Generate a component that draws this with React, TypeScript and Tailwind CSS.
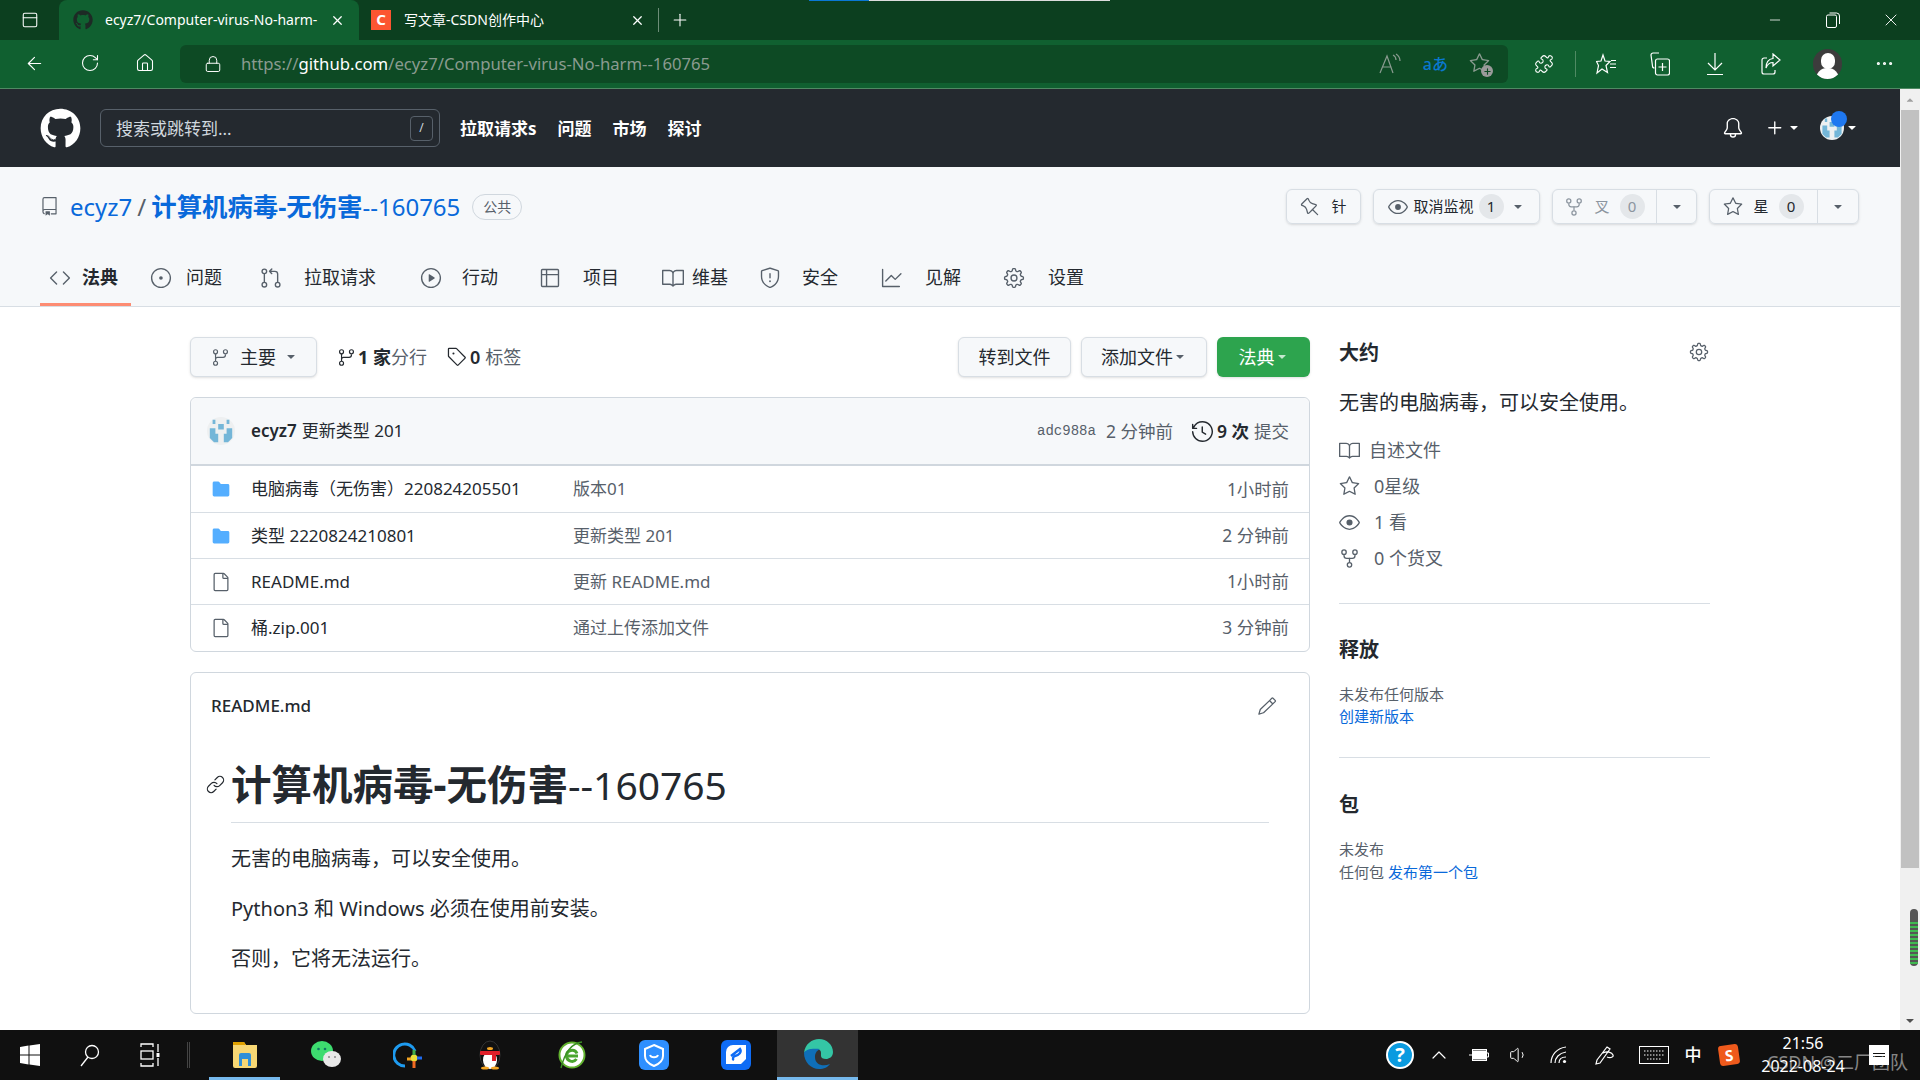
import {
  GoRepo, GoBell, GoPlus, GoPin, GoEye, GoRepoForked, GoStar, GoCode, GoIssueOpened,
  GoGitPullRequest, GoPlay, GoTable, GoBook, GoShield, GoGraph, GoGear, GoGitBranch, GoTag, GoHistory,
  GoFile, GoFileDirectoryFill, GoPencil, GoLink, GoTriangleDown,
} from "react-icons/go";
import { FaGithub } from "react-icons/fa";
import { ArrowLeft, RotateCw, Home, Lock, Puzzle, X, Plus, Minus, MoreHorizontal, ChevronUp, Volume1, PanelTop } from "lucide-react";

const tabs = [
  { label: "法典", icon: GoCode, active: true, w: "w-[91px]", pad: "pl-[9px]", gap: "gap-[11px]" },
  { label: "问题", icon: GoIssueOpened, w: "w-[129px]", pad: "pl-[19px]", gap: "gap-[14px]" },
  { label: "拉取请求", icon: GoGitPullRequest, w: "w-[160px]", pad: "pl-0", gap: "gap-[22px]" },
  { label: "行动", icon: GoPlay, w: "w-[119px]", pad: "pl-0", gap: "gap-[20px]" },
  { label: "项目", icon: GoTable, w: "w-[123px]", pad: "pl-0", gap: "gap-[22px]" },
  { label: "维基", icon: GoBook, w: "w-[97px]", pad: "pl-0", gap: "gap-[8px]" },
  { label: "安全", icon: GoShield, w: "w-[122px]", pad: "pl-0", gap: "gap-[21px]" },
  { label: "见解", icon: GoGraph, w: "w-[122px]", pad: "pl-0", gap: "gap-[22px]" },
  { label: "设置", icon: GoGear, w: "w-[100px]", pad: "pl-0", gap: "gap-[23px]" },
];

const files = [
  { name: "电脑病毒（无伤害）220824205501", msg: "版本01", time: "1小时前", dir: true },
  { name: "类型 2220824210801", msg: "更新类型 201", time: "2 分钟前", dir: true },
  { name: "README.md", msg: "更新 README.md", time: "1小时前", dir: false },
  { name: "桶.zip.001", msg: "通过上传添加文件", time: "3 分钟前", dir: false },
];

function Avatar({ size }: { size: number }) {
  return (
    <svg width={size} height={size} viewBox="0 0 20 20" className="shrink-0">
      <circle cx="10" cy="10" r="10" fill="#eef0f1" />
      <path d="M2 8h4v4h2v6H5l-3-3zM18 8h-4v4h-2v6h3l3-3zM8 5h4v4H8zM4 2h2v3H4zM14 2h2v3h-2z" fill="#74b6d8" />
    </svg>
  );
}

function Count({ n, dim }: { n: string; dim?: boolean }) {
  return (
    <span className={`w-[25px] h-[25px] rounded-full bg-[#e4e7ea] flex items-center justify-center text-[15px] ${dim ? "text-[#8c959f]" : "text-[#24292f]"}`}>
      {n}
    </span>
  );
}

function BarIcon({ children }: { children: React.ReactNode }) {
  return <span className="w-[55px] flex justify-center text-white">{children}</span>;
}

function TrayIcon({ children, cls }: { children: React.ReactNode; cls: string }) {
  return <span className={`flex items-center justify-center text-white ${cls}`}>{children}</span>;
}

export default function App() {
  return (
    <div className="w-[1920px] h-[1080px] overflow-hidden flex flex-col font-['Noto_Sans','Noto_Sans_CJK_SC',sans-serif] text-[#24292f] bg-white">
      {/* edge tab strip */}
      <div className="relative h-[40px] shrink-0 bg-[#0c3f1f] flex items-end text-white text-sm">
        <div className="absolute top-0 left-[809px] w-[301px] h-[1px] flex">
          <div className="w-[60px] bg-[#0a78d4]" />
          <div className="flex-1 bg-[#dddddd]" />
        </div>
        <div className="w-[59px] h-full flex items-center justify-center">
          <PanelTop size={18} strokeWidth={1.4} />
        </div>
        <div className="w-[300px] h-full bg-[#106030] rounded-t-lg flex items-center pl-[14px] pr-[14px]">
          <FaGithub size={20} className="text-[#1d2a25] shrink-0" />
          <span className="ml-[12px] w-[216px] overflow-hidden whitespace-nowrap text-[14px]">ecyz7/Computer-virus-No-harm-</span>
          <X size={15} className="ml-auto" />
        </div>
        <div className="w-[300px] h-full flex items-center pl-[12px] pr-[14px]">
          <span className="w-[20px] h-[20px] bg-[#fc5531] flex items-center justify-center text-white text-[15px] font-bold shrink-0">C</span>
          <span className="ml-[13px] text-[14px]">写文章-CSDN创作中心</span>
          <X size={15} className="ml-auto" />
        </div>
        <div className="w-px h-[24px] bg-[#6d8d78] mb-[8px] ml-[-1px]" />
        <div className="w-[42px] h-full flex items-center justify-center">
          <Plus size={20} strokeWidth={1.3} />
        </div>
        <div className="ml-auto h-full flex items-center">
          <span className="w-[58px] flex justify-center"><Minus size={16} strokeWidth={1.2} /></span>
          <span className="w-[58px] flex justify-center">
            <svg width="14" height="16" viewBox="0 0 14 16" fill="none" stroke="currentColor">
              <rect x="0.5" y="3" width="10" height="12.5" rx="1.5" />
              <path d="M3.5 1h7a3 3 0 0 1 3 3v8" />
            </svg>
          </span>
          <span className="w-[58px] flex justify-center"><X size={20} strokeWidth={1.1} /></span>
        </div>
      </div>

      {/* edge toolbar */}
      <div className="h-[49px] shrink-0 bg-[#106030] border-b border-[#4f8a63] flex items-center pb-[1px]">
        <div className="w-[180px] flex pl-[7px]">
          <BarIcon><ArrowLeft size={21} strokeWidth={1.3} /></BarIcon>
          <BarIcon><RotateCw size={20} strokeWidth={1.3} /></BarIcon>
          <BarIcon><Home size={20} strokeWidth={1.3} /></BarIcon>
        </div>
        <div className="w-[1328px] h-[38px] bg-[#0d4a24] rounded-md flex items-center">
          <Lock size={18} strokeWidth={1.3} className="ml-[24px] text-white" />
          <span className="ml-[19px] text-[16.7px] text-[#8a9b90] whitespace-nowrap">
            https://<span className="text-white">github.com</span>/ecyz7/Computer-virus-No-harm--160765
          </span>
          <div className="ml-auto flex items-center pr-[18px] gap-[21px]">
            <svg width="24" height="24" viewBox="0 0 24 24" fill="none" stroke="#8a9b90" strokeWidth="1.2">
              <path d="M2 21L9 4l6 17M4.5 15h9M15 3c2 1 3 3 3 5M18 2c3 2 4 4 4 7" />
            </svg>
            <span className="text-[#0a78cf] text-[16px] leading-none font-medium">aあ</span>
            <span className="relative text-[#8a9b90]">
              <GoStar size={21} />
              <span className="absolute -right-[3px] -bottom-[3px] w-[12px] h-[12px] rounded-full bg-[#9a9a9a] flex items-center justify-center"><Plus size={9} className="text-[#0d4a24]" strokeWidth={3} /></span>
            </span>
          </div>
        </div>
        <div className="flex-1 flex items-center text-white pl-[26px]">
          <Puzzle size={20} strokeWidth={1.3} />
          <div className="w-px h-[26px] bg-[#4f8a63] ml-[21px] mr-[20px]" />
          <svg width="20" height="22" viewBox="0 0 20 22" fill="none" stroke="white" strokeWidth="1.2">
            <path d="M7 2l2 6 5 .5-4 4 1.5 7L6 16l-5 4 1.5-7.5L0.5 8.5 5 8z" />
            <path d="M14 11h6M14 14.5h6M15 7.5h5" />
          </svg>
          <svg width="20" height="24" viewBox="0 0 20 24" fill="none" stroke="white" strokeWidth="1.2" className="ml-[34px]">
            <path d="M9 1H3a2 2 0 0 0-2 2l1.5 11a2 2 0 0 0 2 2" />
            <rect x="5.5" y="7" width="14" height="16" rx="2" />
            <path d="M12.5 11v8M8.5 15h8" />
          </svg>
          <svg width="20" height="24" viewBox="0 0 20 24" fill="none" stroke="white" strokeWidth="1.2" className="ml-[35px]">
            <path d="M10 1v17M3 11l7 7 7-7M2 22.5h16" />
          </svg>
          <svg width="20" height="22" viewBox="0 0 20 22" fill="none" stroke="white" strokeWidth="1.2" className="ml-[36px]">
            <path d="M6 5H3a2 2 0 0 0-2 2v12a2 2 0 0 0 2 2h9a2 2 0 0 0 2-2v-2" />
            <path d="M12 1l7 6-7 6V9.5C9 9.5 6.5 11 5 15c0-6 3-9 7-9.5z" />
          </svg>
          <span className="ml-[32px] w-[29px] h-[30px] rounded-full bg-[#3c3c3c] overflow-hidden flex flex-col items-center justify-end">
            <span className="w-[14px] h-[16px] rounded-full bg-white mb-[-1px]" />
            <span className="w-[23px] h-[11px] rounded-t-full bg-white" />
          </span>
          <span className="ml-[32px]"><MoreHorizontal size={21} strokeWidth={1.6} /></span>
        </div>
      </div>

      <div className="flex-1 min-h-0 flex">
        <div className="flex-1 min-w-0 flex flex-col">
          {/* github header */}
          <header className="h-[78px] shrink-0 bg-[#24292f] flex items-center text-white">
            <FaGithub size={41} className="ml-[40px] shrink-0" />
            <div className="ml-[19px] w-[340px] h-[38px] rounded-md border border-[#57606a] flex items-center justify-between pl-[15px] pr-[6px]">
              <span className="text-[17px] text-[#d0d7de] pt-[1px]">搜索或跳转到...</span>
              <span className="w-[23px] h-[25px] rounded border border-[#57606a] flex items-center justify-center text-xs text-[#d0d7de]">/</span>
            </div>
            <nav className="ml-[20px] pt-[1px] flex items-center gap-[21px] text-[17px] font-bold">
              <span>拉取请求s</span>
              <span>问题</span>
              <span>市场</span>
              <span>探讨</span>
            </nav>
            <div className="ml-auto flex items-center mr-[41px]">
              <GoBell size={22} />
              <GoPlus size={22} className="ml-[20px]" />
              <GoTriangleDown size={14} className="ml-[1px]" />
              <span className="relative ml-[19px] flex">
                <Avatar size={24} />
                <span className="absolute -top-[5px] -right-[3px] w-[16px] h-[16px] rounded-full bg-[#1f78f0]" />
              </span>
              <GoTriangleDown size={14} className="ml-[1px]" />
            </div>
          </header>

          {/* repo head */}
          <div className="h-[140px] shrink-0 bg-[#f6f8fa] border-b border-[#d8dee4] flex flex-col">
            <div className="h-[79px] shrink-0 flex items-center pl-[40px] pr-[41px]">
              <GoRepo size={19} className="text-[#57606a]" />
              <a className="ml-[11px] text-[24px] text-[#0969da]">ecyz7</a>
              <span className="mx-[5px] text-[24px] text-[#57606a]">/</span>
              <a className="text-[24px] text-[#0969da]"><b className="font-bold text-[25.4px]">计算机病毒-无伤害</b>--160765</a>
              <span className="ml-[12px] h-[26px] w-[50px] border border-[#d0d7de] rounded-full flex items-center justify-center text-[14px] text-[#57606a]">公共</span>
              <div className="ml-auto flex items-center gap-[12px] text-[15px]">
                <button className="w-[75px] h-[35px] border border-[#d8dee4] rounded-md shadow-sm flex items-center justify-center gap-[11px]">
                  <GoPin size={20} className="text-[#57606a]" /> 针
                </button>
                <button className="w-[167px] h-[35px] border border-[#d8dee4] rounded-md shadow-sm flex items-center justify-center gap-[5px]">
                  <GoEye size={20} className="text-[#57606a]" /> 取消监视 <Count n="1" />
                  <GoTriangleDown size={14} className="text-[#57606a] ml-[2px]" />
                </button>
                <div className="w-[145px] h-[35px] border border-[#d8dee4] rounded-md shadow-sm flex items-center">
                  <span className="w-[104px] h-full border-r border-[#d8dee4] flex items-center justify-center gap-[10px] text-[#8c959f]">
                    <GoRepoForked size={20} /> 叉 <Count n="0" dim />
                  </span>
                  <GoTriangleDown size={14} className="text-[#57606a] mx-auto" />
                </div>
                <div className="w-[150px] h-[35px] border border-[#d8dee4] rounded-md shadow-sm flex items-center">
                  <span className="w-[108px] h-full border-r border-[#d8dee4] flex items-center justify-center gap-[10px]">
                    <GoStar size={20} className="text-[#57606a]" /> 星 <Count n="0" />
                  </span>
                  <GoTriangleDown size={14} className="text-[#57606a] mx-auto" />
                </div>
              </div>
            </div>
            <nav className="flex-1 flex pl-[40px] text-[18px]">
              {tabs.map(t => (
                <div key={t.label} className={`${t.w} ${t.pad} ${t.gap} h-full pt-[6px] flex items-center whitespace-nowrap ${t.active ? "font-bold border-b-[3px] border-[#fd8c73]" : "border-b-[3px] border-transparent"}`}>
                  <t.icon size={22} className="text-[#57606a] shrink-0" />
                  <span>{t.label}</span>
                </div>
              ))}
            </nav>
          </div>

          {/* content */}
          <div className="flex-1 min-h-0 overflow-hidden flex pl-[190px] pt-[30px]">
            <main className="w-[1120px] shrink-0">
              <div className="h-[40px] flex items-center text-[18px]">
                <button className="w-[127px] h-[40px] bg-[#f6f8fa] border border-[#d8dee4] rounded-md shadow-sm flex items-center pl-[20px]">
                  <GoGitBranch size={19} className="text-[#57606a]" />
                  <span className="ml-[10px]">主要</span>
                  <GoTriangleDown size={14} className="ml-[8px] text-[#57606a]" />
                </button>
                <GoGitBranch size={19} className="ml-[20px]" />
                <span className="ml-[2px] font-bold">1 家</span><span className="text-[#57606a]">分行</span>
                <GoTag size={20} className="ml-[20px]" />
                <span className="ml-[3px] font-semibold">0</span><span className="ml-[5px] text-[#57606a]">标签</span>
                <div className="ml-auto flex gap-[10px]">
                  <button className="w-[113px] h-[40px] bg-[#f6f8fa] border border-[#d8dee4] rounded-md shadow-sm">转到文件</button>
                  <button className="w-[126px] h-[40px] bg-[#f6f8fa] border border-[#d8dee4] rounded-md shadow-sm flex items-center justify-center">添加文件<GoTriangleDown size={14} className="text-[#57606a]" /></button>
                  <button className="w-[93px] h-[40px] bg-[#2da44e] rounded-md shadow-sm text-white flex items-center justify-center">法典<GoTriangleDown size={14} className="text-[#c5e8cf]" /></button>
                </div>
              </div>

              <div className="mt-[20px] pb-[1px] border border-[#d0d7de] rounded-md">
                <div className="h-[68px] bg-[#f6f8fa] border-b-2 border-[#d0d7de] rounded-t-md flex items-center pl-[16px] pr-[20px] text-[17px]">
                  <Avatar size={28} />
                  <span className="ml-[16px] font-semibold">ecyz7</span>
                  <span className="ml-[5px]">更新类型 201</span>
                  <span className="ml-auto text-[14px] text-[#57606a] font-['Liberation_Mono',monospace]">adc988a</span>
                  <span className="ml-[10px] text-[17.5px] text-[#57606a]">2 分钟前</span>
                  <GoHistory size={23} className="ml-[18px]" />
                  <span className="ml-[3px] text-[17.5px] font-semibold">9 次</span>
                  <span className="ml-[5px] text-[17.5px] text-[#57606a]">提交</span>
                </div>
                {files.map((f, i) => (
                  <div key={f.name} className={`h-[46px] flex items-center px-[20px] text-[17px] ${i > 0 ? "border-t border-[#d8dee4]" : ""}`}>
                    <span className="w-[20px] flex justify-center">
                      {f.dir ? <GoFileDirectoryFill size={24} className="text-[#54aeff]" /> : <GoFile size={24} className="text-[#57606a]" />}
                    </span>
                    <span className="ml-[20px] w-[322px] whitespace-nowrap">{f.name}</span>
                    <span className="text-[#57606a]">{f.msg}</span>
                    <span className="ml-auto text-[17.4px] text-[#57606a]">{f.time}</span>
                  </div>
                ))}
              </div>

              <div className="mt-[20px] h-[342px] border border-[#d0d7de] rounded-md px-[20px]">
                <div className="h-[66px] flex items-center justify-between text-[17px] font-medium pr-[12px]">
                  <span>README.md</span>
                  <GoPencil size={20} className="text-[#57606a]" />
                </div>
                <div className="relative ml-[20px] mr-[20px]">
                  <GoLink size={19} className="absolute -left-[25px] top-[36px] text-[#24292f]" />
                  <h1 className="h-[84px] pt-[16px] border-b border-[#d8dee4] text-[39px] leading-[60px]">
                    <b className="font-bold text-[40.5px]">计算机病毒-无伤害</b>--160765
                  </h1>
                  <p className="mt-[20px] text-[20px] leading-[32px]">无害的电脑病毒，可以安全使用。</p>
                  <p className="mt-[18px] text-[20px] leading-[32px]">Python3 和 Windows 必须在使用前安装。</p>
                  <p className="mt-[18px] text-[20px] leading-[32px]">否则，它将无法运行。</p>
                </div>
              </div>
            </main>

            <aside className="ml-[29px] w-[371px] shrink-0">
              <div className="h-[32px] flex items-center justify-between pr-[1px]">
                <h2 className="text-[20px] font-bold">大约</h2>
                <GoGear size={20} className="text-[#57606a] mt-[-3px]" />
              </div>
              <p className="mt-[20px] text-[20px] leading-[28px]">无害的电脑病毒，可以安全使用。</p>
              <ul className="mt-[20px] text-[18px] text-[#57606a] flex flex-col gap-[10px]">
                <li className="h-[26px] flex items-center"><GoBook size={21} className="mr-[9px]" />自述文件</li>
                <li className="h-[26px] flex items-center"><GoStar size={21} className="mr-[14px]" />0星级</li>
                <li className="h-[26px] flex items-center"><GoEye size={21} className="mr-[14px]" />1 看</li>
                <li className="h-[26px] flex items-center"><GoRepoForked size={21} className="mr-[14px]" />0 个货叉</li>
              </ul>
              <div className="mt-[32px] border-t border-[#d8dee4] pt-[31px]">
                <h2 className="text-[20px] font-bold">释放</h2>
                <p className="mt-[18px] text-[15px] leading-[22px] text-[#57606a]">未发布任何版本</p>
                <p className="text-[15px] leading-[22px] text-[#0969da]">创建新版本</p>
              </div>
              <div className="mt-[30px] border-t border-[#d8dee4] pt-[32px]">
                <h2 className="text-[20px] font-bold">包</h2>
                <p className="mt-[18px] text-[15px] leading-[23px] text-[#57606a]">未发布</p>
                <p className="text-[15px] leading-[23px] text-[#57606a]">任何包 <span className="text-[#0969da]">发布第一个包</span></p>
              </div>
            </aside>
          </div>
        </div>

        {/* scrollbar */}
        <div className="relative w-[20px] shrink-0 bg-[#f0f0f0] flex flex-col items-center">
          <GoTriangleDown size={12} className="rotate-180 text-[#a0a0a0] mt-[5px]" />
          <div className="w-[18px] h-[758px] bg-[#c1c1c1] mt-[4px]" />
          <div className="absolute left-[10px] top-[820px] w-[8px] h-[57px] rounded-full bg-[#555] flex flex-col justify-end gap-[2px] py-[2px] overflow-hidden">
            {Array.from({ length: 11 }).map((_, i) => <span key={i} className="h-[2px] shrink-0 bg-[#3fb950]" />)}
          </div>
          <GoTriangleDown size={14} className="text-[#505050] mt-auto mb-[2px]" />
        </div>
      </div>

      {/* windows taskbar */}
      <div className="h-[50px] shrink-0 bg-[#101010] flex items-center text-white">
        <svg width="20" height="22" viewBox="0 0 20 22" fill="white" className="ml-[20px]">
          <path d="M0 3l8.5-1.4v8.9H0zM9.5 1.4L20 0v10.5H9.5zM0 11.5h8.5v8.9L0 19zM9.5 11.5H20V22L9.5 20.6z" />
        </svg>
        <svg width="20" height="24" viewBox="0 0 20 24" fill="none" stroke="white" strokeWidth="1.3" className="ml-[40px]">
          <circle cx="12" cy="9" r="6.5" />
          <path d="M8 14L1 23" />
        </svg>
        <svg width="20" height="24" viewBox="0 0 20 24" fill="none" stroke="white" strokeWidth="1.3" className="ml-[40px]">
          <path d="M1 4V1h12v3M1 20v3h12v-3" />
          <rect x="1" y="8" width="12" height="8" />
          <path d="M18 1v8M18 15v8" />
          <rect x="16.5" y="10" width="3" height="4" fill="white" stroke="none" />
        </svg>
        <div className="w-[3px] h-[26px] border-x border-[#444] ml-[27px]" />
        {/* pinned apps */}
        <div className="ml-[19px] w-[71px] h-full flex items-center justify-center border-b-[3px] border-[#76b9ed]">
          <svg width="26" height="28" viewBox="0 0 26 28">
            <path d="M1 2h11l2 3h11v21a2 2 0 0 1-2 2H3a2 2 0 0 1-2-2z" fill="#f7d774" />
            <path d="M1 2h11l2 3H1z" fill="#e0a100" />
            <path d="M7 26V15a2 2 0 0 1 2-2h8a2 2 0 0 1 2 2v11h-3v-7h-6v7z" fill="#2f8fd8" />
          </svg>
        </div>
        <div className="w-[82px] h-full ml-[5px] flex items-center justify-center">
          <svg width="30" height="30" viewBox="0 0 30 30">
            <ellipse cx="11" cy="11" rx="11" ry="10" fill="#3ddc6f" />
            <ellipse cx="21" cy="19" rx="9" ry="8" fill="#e8e8e8" />
            <circle cx="7.5" cy="9" r="1.3" fill="#176" /><circle cx="14" cy="9" r="1.3" fill="#176" />
            <circle cx="18" cy="17" r="1" fill="#888" /><circle cx="24" cy="17" r="1" fill="#888" />
          </svg>
        </div>
        <div className="w-[82px] h-full flex items-center justify-center">
          <svg width="30" height="30" viewBox="0 0 30 30" fill="none">
            <path d="M12 26a11 11 0 1 1 10-15" stroke="#1e9bf0" strokeWidth="3" />
            <circle cx="21" cy="18" r="3.5" fill="#e8e03a" />
            <path d="M21 10v5" stroke="#3fae49" strokeWidth="3" />
            <path d="M21 21v7" stroke="#f26b21" strokeWidth="3" />
            <path d="M24 18h5" stroke="#1e6bf0" strokeWidth="3" />
            <path d="M14 19h4" stroke="#f2a321" strokeWidth="3" />
          </svg>
        </div>
        <div className="w-[82px] h-full flex items-center justify-center">
          <svg width="26" height="30" viewBox="0 0 26 30">
            <ellipse cx="13" cy="15" rx="10" ry="14" fill="#111" stroke="#333" />
            <ellipse cx="13" cy="20" rx="7" ry="9" fill="#fff" />
            <rect x="3" y="11" width="20" height="4" rx="1" fill="#e0202a" />
            <rect x="15" y="13" width="4" height="8" fill="#e0202a" />
            <ellipse cx="13" cy="8.5" rx="3" ry="1.5" fill="#f5a623" />
            <ellipse cx="8" cy="28" rx="4" ry="1.6" fill="#f5a623" /><ellipse cx="18" cy="28" rx="4" ry="1.6" fill="#f5a623" />
          </svg>
        </div>
        <div className="w-[82px] h-full flex items-center justify-center">
          <svg width="28" height="30" viewBox="0 0 28 30" fill="none">
            <circle cx="14" cy="15" r="12.5" fill="#fff" stroke="#62b22f" strokeWidth="2" />
            <path d="M20 16H8.5a5.5 5.5 0 0 1 10.5-2.5M8.5 16a5.5 5.5 0 0 0 10 3" stroke="#4aa52e" strokeWidth="3" />
            <path d="M24 2C14 3 7 12 3 28" stroke="#3a8f25" strokeWidth="1.4" />
          </svg>
        </div>
        <div className="w-[82px] h-full flex items-center justify-center">
          <svg width="30" height="30" viewBox="0 0 30 30" fill="none">
            <rect width="30" height="30" rx="6" fill="#2e8fff" />
            <path d="M15 5l9 4v7c0 5-4 8-9 10-5-2-9-5-9-10V9z" stroke="#fff" strokeWidth="2" />
            <path d="M11 15c1 3 7 3 8 0" stroke="#fff" strokeWidth="2" />
          </svg>
        </div>
        <div className="w-[82px] h-full flex items-center justify-center">
          <svg width="30" height="30" viewBox="0 0 30 30" fill="none">
            <rect width="30" height="30" rx="6" fill="#0f6cf5" />
            <path d="M5 24h15l5-5V5H12a7 7 0 0 0-7 7z" fill="#fff" />
            <path d="M10 16l9-7c2 3-1 6-5 7-2 1-3 3-1 4" stroke="#0f6cf5" strokeWidth="2.4" />
          </svg>
        </div>
        <div className="w-[81px] h-full bg-[#333333] flex items-center justify-center border-b-[3px] border-[#76b9ed]">
          <svg width="32" height="32" viewBox="0 0 32 32" fill="none">
            <path d="M2 15C3 6 10 1 17 1c8 0 14 6 14 13 0 5-4 7-7 7-3 0-5-1-5-3 0-4 1-7-6-7-6 0-10 3-11 4z" fill="#34c6a5" />
            <path d="M2 15c0 9 7 16 15 16 5 0 9-2 11-5-7 3-15 1-15-7 0-3 1-6 5-8-7-1-15 0-16 4z" fill="#0f6fb8" />
          </svg>
        </div>

        {/* tray */}
        <div className="ml-auto h-full flex items-center">
          <span className="w-[28px] h-[28px] mx-[1px] rounded-full bg-[#0a9be0] border-2 border-white flex items-center justify-center text-white font-bold text-[20px] leading-none">?</span>
          <TrayIcon cls="w-[48px]"><ChevronUp size={24} strokeWidth={1.2} /></TrayIcon>
          <TrayIcon cls="w-[31px]">
            <svg width="20" height="14" viewBox="0 0 20 14" fill="none" stroke="white">
              <rect x="3.5" y="1.5" width="14" height="11" />
              <rect x="3.5" y="3" width="14" height="8" fill="white" />
              <path d="M18 5h1.5v4H18M0 7h3" />
            </svg>
          </TrayIcon>
          <TrayIcon cls="w-[50px]"><Volume1 size={20} strokeWidth={1.2} /></TrayIcon>
          <TrayIcon cls="w-[30px]">
            <svg width="18" height="18" viewBox="0 0 18 18" fill="none" stroke="white" strokeWidth="1.2">
              <path d="M1 17C1 9 7 2 16 1M5 17c0-5 4-10 11-11M9 17c0-3 2-6 7-6" />
              <circle cx="14.5" cy="15.5" r="1.6" fill="white" stroke="none" />
            </svg>
          </TrayIcon>
          <TrayIcon cls="w-[60px]">
            <svg width="20" height="20" viewBox="0 0 20 20" fill="none" stroke="white" strokeWidth="1.2">
              <path d="M13 2l3 2L6 18l-4 1 1-4zM9 8c4-2 9-1 10 2s-4 3-6 2" />
            </svg>
          </TrayIcon>
          <TrayIcon cls="w-[40px]">
            <svg width="30" height="18" viewBox="0 0 30 18" fill="none" stroke="white">
              <rect x="0.5" y="0.5" width="29" height="17" />
              <path d="M5 5h20M5 9h20M8 13h14" strokeDasharray="1.5 1.5" />
            </svg>
          </TrayIcon>
          <span className="w-[38px] text-center text-[17px] font-medium">中</span>
          <span className="w-[34px] flex justify-center">
            <span className="w-[20px] h-[20px] rounded-[3px] bg-[#ef5a1c] rotate-[-8deg] flex items-center justify-center font-bold text-[15px] leading-none">S</span>
          </span>
          <div className="relative w-[114px] h-full flex flex-col items-center justify-center text-[16px] leading-[23px] text-white">
            <span>21:56</span>
            <span>2022-08-24</span>
            <span className="absolute top-[20px] left-[21px] whitespace-nowrap text-[18px] leading-[24px] text-white/50">CSDN @二厂团队</span>
          </div>
          <span className="w-[38px] flex justify-center">
            <span className="w-[20px] h-[20px] bg-white flex flex-col justify-center gap-[2px] px-[4px]">
              <span className="h-px bg-[#101010]" /><span className="h-px bg-[#101010]" />
            </span>
          </span>
          <span className="w-[22px]" />
        </div>
      </div>
    </div>
  );
}
